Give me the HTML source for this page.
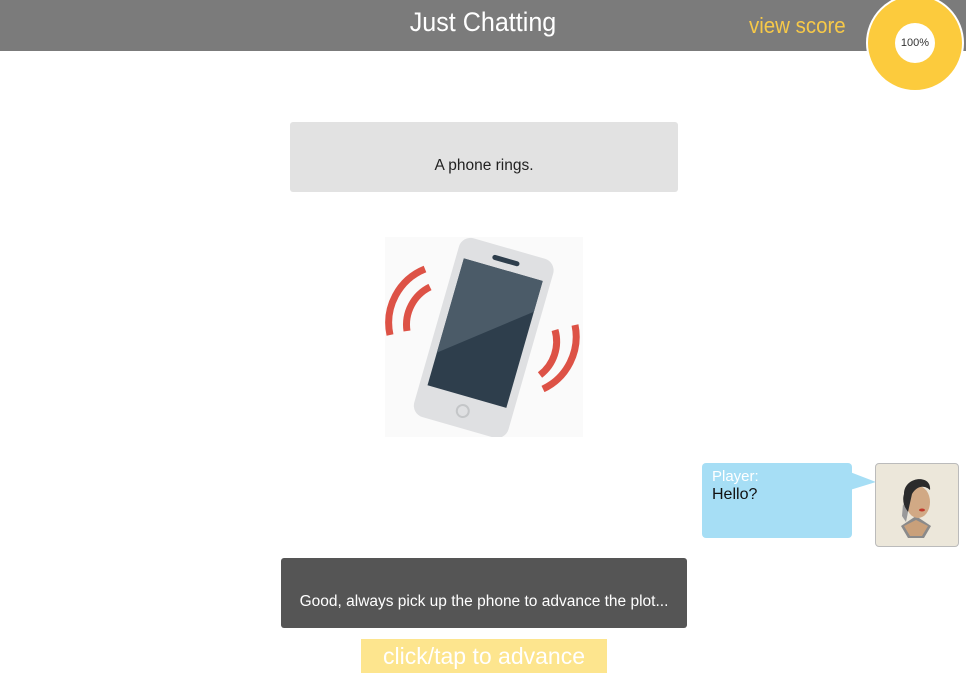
<!DOCTYPE html>
<html><head><style>
body{margin:0;width:966px;height:688px;background:#fff;position:relative;overflow:hidden;font-family:"Liberation Sans",sans-serif}
.bar{position:absolute;left:0;top:0;width:966px;height:51px;background:#7b7b7b}
.title{position:absolute;left:0;width:966px;top:7px;text-align:center;color:#fff;font-size:27px;transform:scaleX(0.93)}
.vs{position:absolute;left:749px;top:13px;color:#f7c948;font-size:22px;transform-origin:0 0;transform:scaleX(0.93)}
.ring{position:absolute;left:866px;top:-6px;width:94px;height:94px;border-radius:50%;background:#fccb3d;border:2px solid #fff}
.ring div{position:absolute;left:27px;top:27px;width:40px;height:40px;border-radius:50%;background:#fff;font-size:11px;line-height:40px;text-align:center;color:#333}
.box{position:absolute;left:290px;top:122px;width:388px;height:70px;background:#e2e2e2;border-radius:3px;text-align:center;font-size:15.5px;color:#222;line-height:88px}
.bub{position:absolute;left:702px;top:463px;width:150px;height:75px;background:#a6def5;border-radius:4px}
.bub .n{position:absolute;left:10px;top:5px;color:#fff;font-size:15px}
.bub .t{position:absolute;left:10px;top:23px;color:#111;font-size:16px}
.av{position:absolute;left:875px;top:463px;width:82px;height:82px;background:#ece7da;border:1px solid #bbb;border-radius:4px}
.nar{position:absolute;left:281px;top:558px;width:406px;height:70px;background:#555;border-radius:3px;color:#fff;font-size:15.5px;text-align:center;line-height:88px}
.adv{position:absolute;left:361px;top:639px;width:246px;height:34px;background:#fde58e;color:#fff;font-size:23px;text-align:center;line-height:34px}
</style></head><body>
<div class="bar"></div>
<div class="title">Just Chatting</div>
<div class="vs">view score</div>
<div class="ring"><div>100%</div></div>
<div class="box">A phone rings.</div>
<svg style="position:absolute;left:385px;top:237px" width="198" height="200" viewBox="0 0 198 200">
<rect width="198" height="200" fill="#fafafa"/>
<g transform="rotate(16 99 100)">
<rect x="50" y="8" width="98" height="186" rx="12" fill="#dfe0e2"/>
<rect x="58" y="30" width="82" height="132" fill="#2e3e4c"/>
<path d="M58 30H140V62L58 128Z" fill="#4b5b68"/>
<rect x="85" y="18" width="28" height="5" rx="2.5" fill="#2e3e4c"/>
<circle cx="99" cy="177" r="6" fill="none" stroke="#c4c6c8" stroke-width="2"/>
</g>
<g fill="none" stroke="#dd5246" stroke-width="7">
<path d="M40 32A58 58 0 0 0 5 98"/>
<path d="M45 50A42 42 0 0 0 22 94"/>
<path d="M190 88A58 58 0 0 1 158 152"/>
<path d="M170 93A42 42 0 0 1 155 138"/>
</g>
</svg>
<div class="bub"><span class="n">Player:</span><span class="t">Hello?</span></div>
<svg style="position:absolute;left:850px;top:472px" width="26" height="20"><path d="M0 0L26 10L0 18Z" fill="#a6def5"/></svg>
<div class="av"><svg width="82" height="82">
<path d="M25 62L40 52L55 62L48 74H32Z" fill="#8a8a8a"/>
<path d="M28 62L40 56L52 62L46 72H34Z" fill="#c9a07a"/>
<ellipse cx="42" cy="38" rx="12" ry="16" fill="#d1a985"/>
<path d="M28 30C28 12 56 10 54 26C50 22 42 20 36 30L32 48C28 44 26 36 28 30Z" fill="#2b2b2b"/>
<path d="M27 40L32 48L30 58L26 52Z" fill="#999"/>
<ellipse cx="46" cy="46" rx="3" ry="1.5" fill="#c0392b"/>
</svg></div>
<div class="nar">Good, always pick up the phone to advance the plot...</div>
<div class="adv">click/tap to advance</div>
</body></html>
